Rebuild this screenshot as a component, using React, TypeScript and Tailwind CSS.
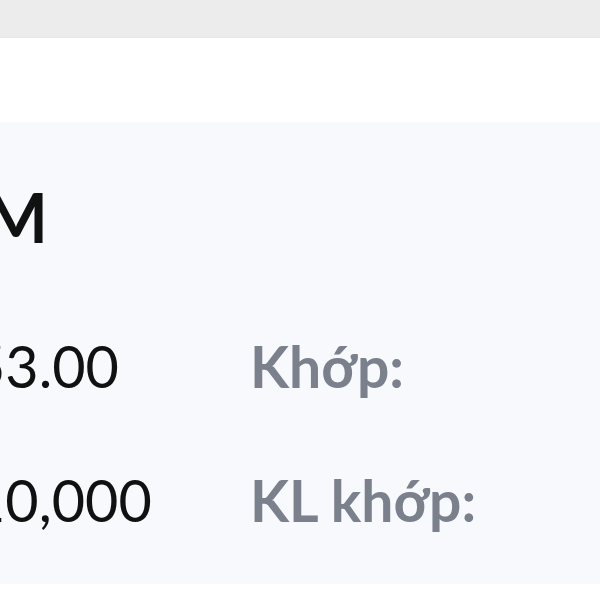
import React from "react";

export default function App() {
  return (
    <div className="w-[600px] h-[600px] bg-white overflow-hidden" style={{ fontFamily: "Lato, 'Noto Sans', sans-serif" }}>
      <div className="h-[38px] bg-[#ececec] border-b border-[#e6e6e6]" />
      <div className="h-[84px] bg-white" />
      <div className="h-[462px] bg-[#f8f9fd] overflow-hidden pt-[63px]">
        <div className="w-[48px] h-[64px] flex justify-end">
          <span className="text-[68px] leading-[64px] font-bold text-[#111111] whitespace-nowrap">VNM</span>
        </div>
        <div className="ml-[-28px] mt-[88px] grid grid-cols-[278px_1fr] gap-y-[74px]">
          <div className="h-[60px] text-[57.5px] leading-[58px] text-[#111111] whitespace-nowrap">53.00</div>
          <div className="h-[60px] text-[57px] leading-[59px] font-bold text-[#7a808c] whitespace-nowrap">Khớp:</div>
          <div className="h-[60px] text-[57.5px] leading-[58px] text-[#111111] whitespace-nowrap">10,000</div>
          <div className="h-[60px] text-[57px] leading-[59px] font-bold text-[#7a808c] whitespace-nowrap">KL khớp:</div>
        </div>
      </div>
    </div>
  );
}
